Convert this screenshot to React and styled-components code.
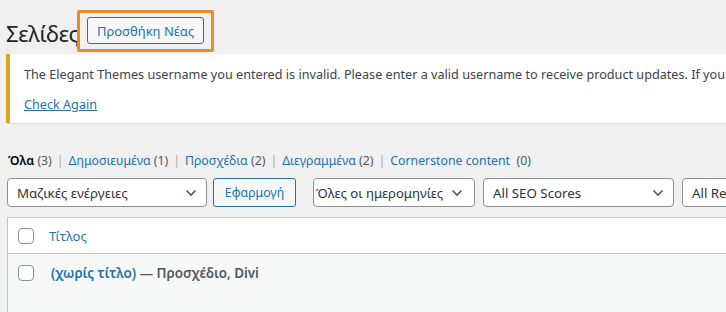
import React from "react";
import styled, { createGlobalStyle } from "styled-components";

const GlobalStyle = createGlobalStyle`
  html, body {
    margin: 0;
    padding: 0;
    overflow: hidden;
    background: #f0f0f1;
  }
  body {
    font-family: "Noto Sans", "Open Sans", sans-serif;
    color: #3c434a;
    font-size: 13px;
  }
`;

const Wrap = styled.div`
  width: 960px;
  padding: 17px 0 0 7px;
  display: flex;
  flex-direction: column;
`;

const Header = styled.div`
  display: flex;
  align-items: center;
  height: 27px;
`;

const Title = styled.h1`
  margin: 0 8px 0 -1px;
  font-size: 22px;
  letter-spacing: -0.3px;
  font-weight: 400;
  line-height: 27px;
  color: #1d2327;
  position: relative;
  top: 3px;
`;

const AddButton = styled.a`
  position: relative;
  display: inline-flex;
  align-items: center;
  height: 27px;
  box-sizing: border-box;
  padding: 0 9px;
  border: 1px solid #2271b1;
  border-radius: 3px;
  background: #f6f7f7;
  color: #2271b1;
  font-size: 13px;
  text-decoration: none;

  /* orange highlight frame drawn over the screenshot */
  &::after {
    content: "";
    position: absolute;
    top: -8px;
    bottom: -9px;
    left: -11px;
    right: -11px;
    border: 3px solid #eb8a2a;
    border-radius: 2px;
  }
`;

const Notice = styled.div`
  margin: 10px 0 0 -1px;
  background: #fff;
  border-left: 4px solid #dba617;
  box-shadow: 0 1px 1px rgba(0, 0, 0, 0.08);
  padding: 10px 14px 9px;
  display: flex;
  flex-direction: column;
  gap: 10px;
`;

const NoticeText = styled.p`
  margin: 0;
  line-height: 20px;
  white-space: nowrap;
  font-size: 12.65px;
`;

const Link = styled.a`
  color: #2271b1;
  text-decoration: ${(p) => (p.$underline ? "underline" : "none")};
  font-weight: ${(p) => (p.$bold ? 600 : 400)};
  font-size: ${(p) => p.$size || "inherit"};
`;

const Views = styled.ul`
  list-style: none;
  margin: 28px 0 0 1px;
  padding: 0;
  display: flex;
  line-height: 20px;
  font-size: 12.3px;
  color: #3c434a;
`;

const ViewItem = styled.li`
  white-space: nowrap;
`;

const Current = styled.strong`
  color: #000;
  font-weight: 600;
`;

const Count = styled.span`
  color: #50575e;
`;

const Sep = styled.span`
  color: #a7aaad;
  margin: 0 5px;
`;

const Filters = styled.div`
  display: flex;
  align-items: center;
  margin-top: 7px;
  height: 29px;
`;

const Group = styled.div`
  display: flex;
  gap: ${(p) => p.$gap || "6px"};
  margin-right: ${(p) => p.$mr || "0"};
`;

const Select = styled.div`
  box-sizing: border-box;
  width: ${(p) => p.$w}px;
  height: 29px;
  border: 1px solid #8c8f94;
  border-radius: 4px;
  background: #fff;
  display: flex;
  align-items: center;
  justify-content: ${(p) => (p.$tight ? "flex-start" : "space-between")};
  gap: 8px;
  padding: 0 9px 0 ${(p) => p.$pl || "9px"};
  font-size: ${(p) => p.$fs || "13.3px"};
  color: #2c3338;
  white-space: nowrap;
  overflow: hidden;
  flex-shrink: 0;
`;

const ApplyButton = styled.div`
  box-sizing: border-box;
  width: 83px;
  height: 29px;
  border: 1px solid #2271b1;
  border-radius: 3px;
  background: #f6f7f7;
  color: #2271b1;
  font-size: 12.3px;
  display: flex;
  align-items: center;
  justify-content: center;
`;

const Table = styled.div`
  margin-top: 10px;
  border: 1px solid #c3c4c7;
  background: #fff;
  height: 120px;
`;

const HeadRow = styled.div`
  display: flex;
  align-items: center;
  height: 35px;
  border-bottom: 1px solid #c3c4c7;
  padding-left: 10px;
  gap: 15px;
`;

const BodyRow = styled.div`
  display: flex;
  align-items: flex-start;
  background: #f6f7f7;
  height: 100%;
  padding: 9px 0 0 10px;
  gap: 17px;
  line-height: 20px;
`;

const Checkbox = styled.span`
  display: inline-block;
  box-sizing: border-box;
  width: 16px;
  height: 16px;
  border: 1px solid #8c8f94;
  border-radius: 4px;
  background: #fff;
  flex-shrink: 0;
  margin-top: ${(p) => p.$mt || "0"};
`;

const State = styled.span`
  color: #50575e;
  font-weight: 600;
  font-size: 13.4px;
`;

const Chevron = () => (
  <svg width="12" height="8" viewBox="0 0 12 8" fill="none">
    <path d="M1.5 1.5 L6 6 L10.5 1.5" stroke="#50575e" strokeWidth="1.6" />
  </svg>
);

export default function App() {
  return (
    <>
      <GlobalStyle />
      <Wrap>
        <Header>
          <Title>Σελίδες</Title>
          <AddButton href="#">Προσθήκη Νέας</AddButton>
        </Header>

        <Notice>
          <NoticeText>
            The Elegant Themes username you entered is invalid. Please enter a valid username to receive product updates. If you forgot your username you can request it here.
          </NoticeText>
          <NoticeText>
            <Link href="#" $underline>Check Again</Link>
          </NoticeText>
        </Notice>

        <Views>
          <ViewItem>
            <Current>Όλα</Current> <Count>(3)</Count>
            <Sep>|</Sep>
          </ViewItem>
          <ViewItem>
            <Link href="#">Δημοσιευμένα</Link> <Count>(1)</Count>
            <Sep>|</Sep>
          </ViewItem>
          <ViewItem>
            <Link href="#">Προσχέδια</Link> <Count>(2)</Count>
            <Sep>|</Sep>
          </ViewItem>
          <ViewItem>
            <Link href="#">Διεγραμμένα</Link> <Count>(2)</Count>
            <Sep>|</Sep>
          </ViewItem>
          <ViewItem>
            <Link href="#">Cornerstone content</Link> &nbsp;<Count>(0)</Count>
          </ViewItem>
        </Views>

        <Filters>
          <Group $mr="17px">
            <Select $w={200}>
              Μαζικές ενέργειες <Chevron />
            </Select>
            <ApplyButton>Εφαρμογή</ApplyButton>
          </Group>
          <Group $gap="8px">
            <Select $w={162} $tight $pl="2px" $fs="13.1px">
              Όλες οι ημερομηνίες <Chevron />
            </Select>
            <Select $w={191}>
              All SEO Scores <Chevron />
            </Select>
            <Select $w={191}>
              All Readability Scores <Chevron />
            </Select>
          </Group>
        </Filters>

        <Table>
          <HeadRow>
            <Checkbox />
            <Link href="#" $size="13px">Τίτλος</Link>
          </HeadRow>
          <BodyRow>
            <Checkbox $mt="2px" />
            <span>
              <Link href="#" $bold $size="13.4px">(χωρίς τίτλο)</Link>
              <State> — Προσχέδιο, Divi</State>
            </span>
          </BodyRow>
        </Table>
      </Wrap>
    </>
  );
}
